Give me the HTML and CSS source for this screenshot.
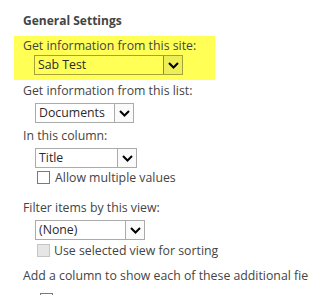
FILE: index.html
```
<!DOCTYPE html>
<html lang="en">
	<head>
		<meta charset="utf-8">
		<title>General Settings</title>
		<link rel="stylesheet" href="styles.css">
	</head>
	<body>

		<div class="settings">

			<div class="heading">General Settings</div>

			<div class="field highlight">
				<div class="label">Get information from this site:</div>
				<div class="select site">
					<span class="value">Sab Test</span>
					<span class="arrow"><svg width="11" height="7" viewBox="0 0 11 7"><path d="M1 1 L5.5 5.5 L10 1" fill="none" stroke="#000" stroke-width="2"/></svg></span>
				</div>
			</div>

			<div class="field">
				<div class="label">Get information from this list:</div>
				<div class="select list">
					<span class="value">Documents</span>
					<span class="arrow"><svg width="11" height="7" viewBox="0 0 11 7"><path d="M1 1 L5.5 5.5 L10 1" fill="none" stroke="#000" stroke-width="2"/></svg></span>
				</div>
			</div>

			<div class="field">
				<div class="label">In this column:</div>
				<div class="select column">
					<span class="value">Title</span>
					<span class="arrow"><svg width="11" height="7" viewBox="0 0 11 7"><path d="M1 1 L5.5 5.5 L10 1" fill="none" stroke="#000" stroke-width="2"/></svg></span>
				</div>
				<div class="check">
					<span class="box"></span>
					<span>Allow multiple values</span>
				</div>
			</div>

			<div class="field">
				<div class="label">Filter items by this view:</div>
				<div class="select view">
					<span class="value">(None)</span>
					<span class="arrow"><svg width="11" height="7" viewBox="0 0 11 7"><path d="M1 1 L5.5 5.5 L10 1" fill="none" stroke="#000" stroke-width="2"/></svg></span>
				</div>
				<div class="check disabled">
					<span class="box"></span>
					<span>Use selected view for sorting</span>
				</div>
			</div>

			<div class="field">
				<div class="label">Add a column to show each of these additional fields:</div>
				<div class="check extra">
					<span class="box"></span>
				</div>
			</div>

		</div>

	</body>
</html>
```

FILE: styles.css
```
html, body {
	margin: 0;
	background: #ffffff;
	font-family: "Open Sans", sans-serif;
	font-size: 12.3px;
	color: #444444;
	overflow: hidden;
}

.settings {
	padding: 12px 0 0 23px;
	white-space: nowrap;
}

.heading {
	font-weight: bold;
	font-size: 12px;
	line-height: 17px;
	margin-bottom: 7px;
}

.field {
	display: flex;
	flex-direction: column;
	align-items: flex-start;
	margin-bottom: 4px;
}

.label {
	line-height: 17px;
	margin-bottom: 4px;
}

.highlight {
	background: #ffff55;
	margin-left: -9px;
	padding: 1px 0 5px 9px;
	width: 192px;
	margin-bottom: 2px;
}

.highlight .label {
	margin-bottom: 1px;
}

.select {
	display: flex;
	align-items: stretch;
	height: 18px;
	margin-left: 12px;
	border: 1px solid #ababab;
	background: #ffffff;
	color: #2a2a2a;
}

.select .value {
	flex: 1;
	padding-left: 3px;
	line-height: 18px;
}

.select .arrow {
	width: 18px;
	border-left: 1px solid #ababab;
	background: #fafafa;
	display: flex;
	align-items: center;
	justify-content: center;
}

.highlight .select {
	margin-left: 11px;
	background: #ffff55;
	border-color: #a3a33a;
}

.highlight .select .arrow {
	background: #eeee58;
	border-left-color: #8e8e30;
}

.site { width: 147px; }
.list { width: 97px; }
.column { width: 100px; }
.view { width: 108px; }

.check {
	display: flex;
	align-items: center;
	gap: 5px;
	height: 13px;
	margin: 3px 0 11px 14px;
	line-height: 15px;
}

.check .box {
	width: 11px;
	height: 11px;
	border: 1px solid #7a7a7a;
	background: #ffffff;
}

.check.disabled {
	gap: 4px;
	margin-top: 4px;
	margin-bottom: 6px;
}

.check.disabled .box {
	border-color: #c5c5c5;
	background: #e6e6e6;
}

.check.extra {
	margin: 5px 0 0 17px;
}
```
